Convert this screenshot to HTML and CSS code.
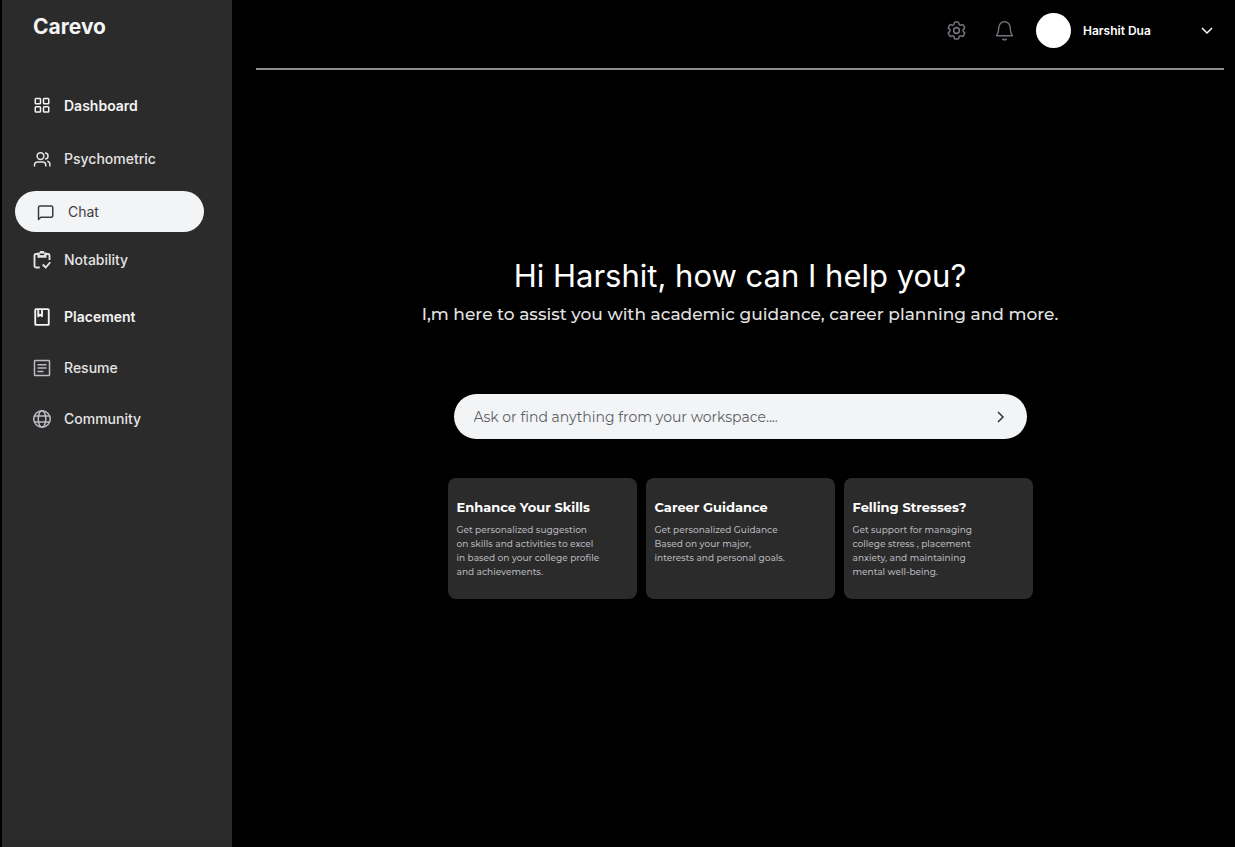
FILE: index.html
```html
<!DOCTYPE html>
<html lang="en">
<head>
<meta charset="utf-8">
<meta name="viewport" content="width=device-width, initial-scale=1">
<title>Carevo</title>
<link rel="stylesheet" href="styles.css">
</head>
<body>
<div class="app">
  <aside class="sidebar">
    <div class="brand">Carevo</div>
    <nav class="nav">
      <a class="nav-link nav-link--bold" href="#">
        <svg class="icon" viewBox="0 0 24 24"><rect x="3" y="2" width="7" height="7" rx="1"/><rect x="14" y="2" width="7" height="7" rx="1"/><rect x="3" y="13" width="7" height="7" rx="1"/><rect x="14" y="13" width="7" height="7" rx="1"/></svg>
        Dashboard
      </a>
      <a class="nav-link" href="#">
        <svg class="icon" viewBox="0 0 24 24"><circle cx="10" cy="8" r="4.500"/><path d="M2 22v-2a4 4 0 0 1 4-4h7a4 4 0 0 1 4 4v2M16 4a4 4 0 0 1 0 8M19 15a4 4 0 0 1 3.500 4v3"/></svg>
        Psychometric
      </a>
      <a class="nav-link nav-link--active" href="#" aria-current="page">
        <svg class="icon" viewBox="0 0 24 24"><path d="M2 22V6a2 2 0 0 1 2-2h15a2 2 0 0 1 2 2v11a2 2 0 0 1-2 2H5z"/></svg>
        Chat
      </a>
      <a class="nav-link nav-link--near" href="#">
        <svg class="icon icon--heavy" viewBox="0 0 24 24"><path d="M7 4H4a2 2 0 0 0-2 2v14a2 2 0 0 0 2 2h5M17 4h3a2 2 0 0 1 2 2v6M13 18l4 4 6-7"/><path fill="currentColor" stroke="none" d="M6 2h3a3 3 0 0 1 6 0h3v7H6z"/><path class="clip-hole" d="M9 4.500h6"/></svg>
        Notability
      </a>
      <a class="nav-link nav-link--bold nav-link--far" href="#">
        <svg class="icon icon--heavy" viewBox="0 0 24 24"><path d="M4 1.500h16a1 1 0 0 1 1 1v19a1 1 0 0 1-1 1H4a1 1 0 0 1-1-1v-19a1 1 0 0 1 1-1zM7 2v9l2.500-2 2.500 2V2"/></svg>
        Placement
      </a>
      <a class="nav-link nav-link--close" href="#">
        <svg class="icon icon--soft" viewBox="0 0 24 24"><rect x="2" y="2" width="20" height="20" rx="1"/><path d="M6 7.500h12M6 12h12M6 16.500h8"/></svg>
        Resume
      </a>
      <a class="nav-link nav-link--close" href="#">
        <svg class="icon icon--soft" viewBox="0 0 24 24"><circle cx="12" cy="12" r="11"/><ellipse cx="12" cy="12" rx="5" ry="11"/><path d="M2 8h20M2 16h20"/></svg>
        Community
      </a>
    </nav>
  </aside>

  <div class="main">
    <header class="topbar">
      <button class="icon-button" type="button" aria-label="Settings">
        <svg class="icon icon--top" viewBox="1 1 22 22"><path d="M9.594 3.940c.09-.542.56-.94 1.110-.94h2.593c.55 0 1.020.398 1.110.94l.213 1.281c.063.374.313.686.645.87.074.04.147.083.22.127.325.196.72.257 1.075.124l1.217-.456a1.125 1.125 0 0 1 1.370.49l1.296 2.247a1.125 1.125 0 0 1-.26 1.431l-1.003.827c-.293.241-.438.613-.43.992a7.723 7.723 0 0 1 0 .255c-.008.378.137.75.43.991l1.004.827c.424.35.534.955.26 1.430l-1.298 2.247a1.125 1.125 0 0 1-1.369.491l-1.217-.456c-.355-.133-.75-.072-1.076.124a6.470 6.470 0 0 1-.22.128c-.331.183-.581.495-.644.869l-.213 1.281c-.09.543-.56.94-1.110.94h-2.594c-.55 0-1.019-.398-1.110-.94l-.213-1.281c-.062-.374-.312-.686-.644-.87a6.520 6.520 0 0 1-.22-.127c-.325-.196-.72-.257-1.076-.124l-1.217.456a1.125 1.125 0 0 1-1.369-.49l-1.297-2.247a1.125 1.125 0 0 1 .26-1.431l1.004-.827c.292-.24.437-.613.43-.991a6.932 6.932 0 0 1 0-.255c.007-.38-.138-.751-.43-.992l-1.004-.827a1.125 1.125 0 0 1-.26-1.430l1.297-2.247a1.125 1.125 0 0 1 1.370-.491l1.216.456c.356.133.751.072 1.076-.124.072-.044.146-.086.22-.128.332-.183.582-.495.644-.869l.214-1.280Z"/><circle cx="12" cy="12" r="3"/></svg>
      </button>
      <button class="icon-button" type="button" aria-label="Notifications">
        <svg class="icon icon--top" viewBox="0 0 24 24"><path d="M12 2a6.500 6.500 0 0 0-6.500 6.500c0 4.500-.7 6.500-2.500 9.500h18c-1.800-3-2.500-5-2.500-9.500A6.500 6.500 0 0 0 12 2zM10 22q2 1 4 0"/></svg>
      </button>
      <button class="account" type="button">
        <span class="avatar"></span>
        <span class="account-name">Harshit Dua</span>
        <svg class="chevron" viewBox="0 0 12 12"><path d="M1 4l5 5 5-5"/></svg>
      </button>
    </header>

    <main class="content">
      <h1 class="title">Hi Harshit, how can I help you?</h1>
      <p class="subtitle">I,m here to assist you with academic guidance, career planning and more.</p>
      <form class="ask">
        <input class="ask-input" type="text" aria-label="Ask or find anything" placeholder="Ask or find anything from your workspace....">
        <button class="ask-send" type="button" aria-label="Send">
          <svg class="chevron" viewBox="0 0 12 12"><path d="M3 1l5 5-5 5"/></svg>
        </button>
      </form>
      <div class="cards">
        <section class="card">
          <h2 class="card-title">Enhance Your Skills</h2>
          <p class="card-text">Get personalized suggestion<br>on skills and activities to excel<br>in based on your college profile<br>and achievements.</p>
        </section>
        <section class="card">
          <h2 class="card-title">Career Guidance</h2>
          <p class="card-text">Get personalized Guidance<br>Based on your major,<br>interests and personal goals.</p>
        </section>
        <section class="card">
          <h2 class="card-title">Felling Stresses?</h2>
          <p class="card-text">Get support for managing<br>college stress , placement<br>anxiety, and maintaining<br>mental well-being.</p>
        </section>
      </div>
    </main>
  </div>
</div>
</body>
</html>
```
FILE: styles.css
```css
* { box-sizing: border-box; }

body {
  margin: 0;
  background: #000;
  color: #fff;
  font-family: Inter, "Liberation Sans", sans-serif;
}

button {
  padding: 0;
  border: 0;
  background: none;
  color: inherit;
  font: inherit;
  cursor: pointer;
}

.app {
  display: flex;
  min-height: 100vh;
}

.sidebar {
  flex: none;
  width: 232px;
  padding: 13px 28px 24px 13px;
  border-left: 2px solid #000;
  background: #2b2b2b;
}

.brand {
  padding-left: 18px;
  color: #f4f4f4;
  font-size: 21px;
  font-weight: 700;
  line-height: 28px;
}

.nav {
  display: flex;
  flex-direction: column;
  margin-top: 44px;
}

.nav-link {
  display: flex;
  align-items: center;
  gap: 13px;
  height: 41px;
  margin-bottom: 12px;
  padding-left: 18px;
  border-radius: 24px;
  color: #e4e4e4;
  font-size: 14px;
  font-weight: 500;
  text-decoration: none;
}

.nav-link--bold {
  color: #f4f4f4;
  font-weight: 600;
}

.nav-link--active {
  padding-left: 22px;
  background: #f3f4f6;
  color: #3c3c40;
  font-weight: 400;
}

.nav-link--near { margin-top: -5px; }
.nav-link--far { margin-top: 4px; }
.nav-link--close { margin-top: -2px; }

.icon {
  flex: none;
  width: 18px;
  height: 18px;
  fill: none;
  stroke: currentColor;
  stroke-width: 2;
  stroke-linejoin: round;
}

.icon--soft { color: #bcbcc4; }

.icon--heavy { stroke-width: 2.500; }

.clip-hole {
  stroke: #2b2b2b;
  stroke-width: 2;
}

.icon--top {
  width: 21px;
  height: 21px;
  stroke-width: 1.600;
  stroke-linecap: round;
}

.main {
  display: flex;
  flex: 1;
  flex-direction: column;
  min-width: 0;
  padding: 0 11px 0 24px;
}

.topbar {
  display: flex;
  align-items: center;
  justify-content: flex-end;
  gap: 27px;
  height: 70px;
  padding: 0 11px 8px 0;
  border-bottom: 2px solid #8c8c8c;
}

.icon-button {
  display: flex;
  color: #73737d;
}

.account {
  display: flex;
  align-items: center;
  gap: 12px;
  margin-left: -6px;
}

.avatar {
  width: 35px;
  height: 35px;
  border-radius: 50%;
  background: #fff;
}

.account-name {
  min-width: 106px;
  font-size: 12px;
  font-weight: 600;
  text-align: left;
}

.chevron {
  width: 12px;
  height: 12px;
  fill: none;
  stroke: currentColor;
  stroke-width: 1.500;
}

.content {
  display: flex;
  flex-direction: column;
  align-items: center;
  padding: 184px 0 32px;
}

.title {
  margin: 0;
  font-size: 31px;
  font-weight: 400;
  line-height: 44px;
}

.subtitle {
  margin: 4px 0 0;
  color: #e2e2e2;
  font-family: Montserrat, Inter, sans-serif;
  font-size: 17px;
  font-weight: 500;
  line-height: 24px;
}

.ask {
  display: flex;
  align-items: center;
  width: 100%;
  max-width: 573px;
  height: 45px;
  margin-top: 68px;
  padding: 0 20px;
  border-radius: 24px;
  background: #f3f4f6;
  color: #333;
}

.ask-input {
  flex: 1;
  min-width: 0;
  padding: 0;
  border: 0;
  outline: 0;
  background: none;
  color: #333;
  font-family: Montserrat, Inter, sans-serif;
  font-size: 14px;
}

.ask-input::placeholder {
  color: #5d5f66;
  opacity: 1;
}

.ask-send { display: flex; }

.cards {
  display: grid;
  grid-template-columns: repeat(3, 1fr);
  gap: 9px;
  width: 100%;
  max-width: 585px;
  margin-top: 39px;
}

.card {
  min-height: 121px;
  padding: 19px 9px;
  border-radius: 8px;
  background: #2b2b2b;
  font-family: Montserrat, Inter, sans-serif;
}

.card-title {
  margin: 0;
  font-size: 13px;
  font-weight: 700;
  line-height: 20px;
}

.card-text {
  margin: 6px 0 0;
  color: #b4b4b8;
  font-size: 9px;
  font-weight: 500;
  line-height: 14px;
}
```
